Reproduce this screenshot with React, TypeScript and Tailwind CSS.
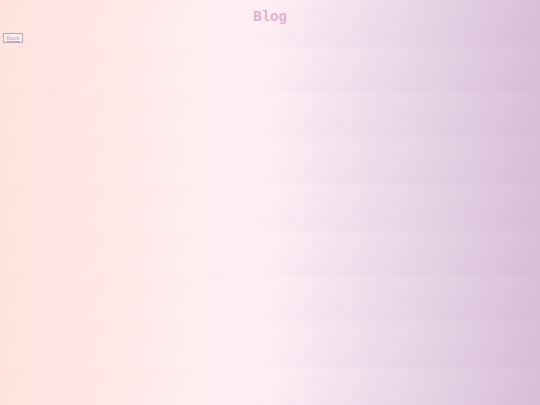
export default function App() {
  return (
    <div className="min-h-[405px] w-full bg-[linear-gradient(113deg,#ffe2dd_0%,#fff0f5_47%,#d6bdd9_100%)] bg-[length:100%_46px] bg-repeat">
      <div className="h-[46px]">
        <h1 className="pt-[9px] text-center font-['Liberation_Mono',monospace] text-[14px] font-bold leading-[16px] text-[#e6b0cb]">
          Blog
        </h1>
        <button className="ml-[3px] mt-[8px] block h-[10px] w-[20px] border border-[#b3a9ae] bg-[#fbeef1] p-0 font-['Liberation_Sans',sans-serif] text-[6px] leading-[8px] text-[#dca0c2] underline">
          Back
        </button>
      </div>
    </div>
  );
}
